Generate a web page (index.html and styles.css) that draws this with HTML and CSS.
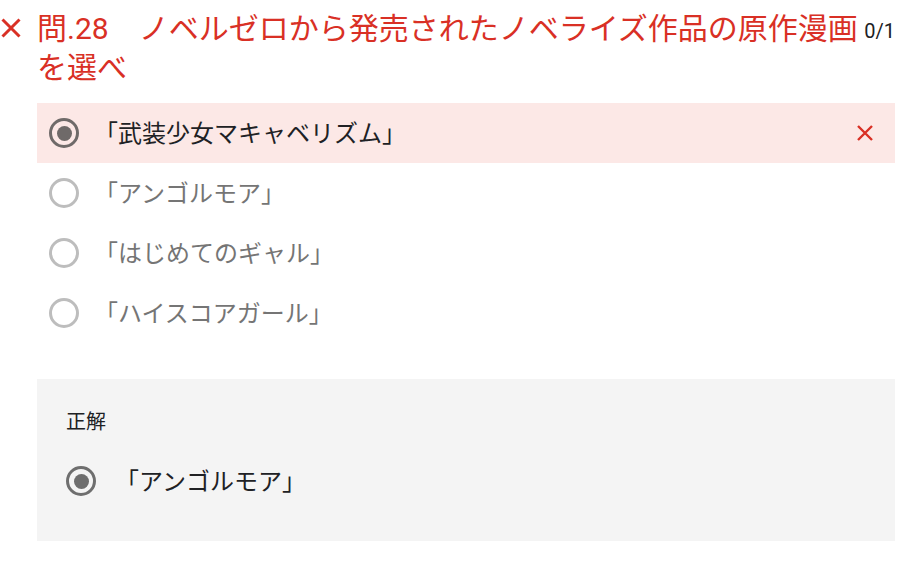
FILE: index.html
```html
<!DOCTYPE html>
<html lang="ja">
  <head>
    <meta charset="UTF-8" />
    <title>問.28</title>
    <link rel="stylesheet" href="styles.css">
  </head>

  <body>
    <div class="question">
      <div class="q-header">
        <div class="q-mark">
          <svg width="20" height="20" viewBox="0 0 20 20">
            <path d="M1.5 1.5 L18.5 18.5 M18.5 1.5 L1.5 18.5" stroke="#d93025" stroke-width="3" fill="none" />
          </svg>
        </div>
        <div class="q-title">問.28　ノベルゼロから発売されたノベライズ作品の原作漫画を選べ</div>
        <div class="q-score">0/1</div>
      </div>

      <div class="options">
        <div class="option wrong">
          <div class="radio checked"></div>
          <div class="option-text">「武装少女マキャベリズム」</div>
          <div class="option-mark">
            <svg width="16" height="16" viewBox="0 0 16 16">
              <path d="M1 1 L15 15 M15 1 L1 15" stroke="#d93025" stroke-width="2.4" fill="none" />
            </svg>
          </div>
        </div>
        <div class="option">
          <div class="radio"></div>
          <div class="option-text">「アンゴルモア」</div>
        </div>
        <div class="option">
          <div class="radio"></div>
          <div class="option-text">「はじめてのギャル」</div>
        </div>
        <div class="option">
          <div class="radio"></div>
          <div class="option-text">「ハイスコアガール」</div>
        </div>
      </div>

      <div class="answer">
        <div class="answer-label">正解</div>
        <div class="option">
          <div class="radio checked"></div>
          <div class="option-text">「アンゴルモア」</div>
        </div>
      </div>
    </div>
  </body>
</html>
```

FILE: styles.css
```css
body {
  margin: 0;
  background: #fff;
  font-family: Roboto, "Noto Sans CJK JP", sans-serif;
  color: #202124;
}

div {
  box-sizing: border-box;
}

.question {
  width: 895px;
  padding-top: 9px;
}

.q-header {
  display: flex;
  align-items: flex-start;
}

.q-mark {
  width: 37px;
  padding-left: 1px;
  padding-top: 9px;
  display: flex;
}

.q-title {
  flex: 1 1 0;
  font-size: 30px;
  line-height: 39px;
  color: #d93025;
}

.q-score {
  font-size: 20px;
  line-height: 26px;
  padding-top: 9px;
  padding-left: 4px;
}

.options {
  margin-top: 16px;
  margin-left: 37px;
}

.option {
  height: 60px;
  display: flex;
  align-items: center;
  padding-left: 12px;
}

.option.wrong {
  background: #fce8e6;
}

.radio {
  width: 30px;
  height: 30px;
  border: 3px solid #bdbdbd;
  border-radius: 50%;
  display: flex;
  align-items: center;
  justify-content: center;
  flex-shrink: 0;
}

.radio.checked {
  border-color: #6f6a69;
}

.radio.checked::after {
  content: "";
  width: 15px;
  height: 15px;
  border-radius: 50%;
  background: #6f6a69;
}

.option-text {
  flex: 1 1 0;
  margin-left: 15px;
  padding-bottom: 4px;
  font-size: 24px;
  color: #757575;
}

.option.wrong .option-text {
  color: #202124;
}

.option-mark {
  display: flex;
  margin-right: 22px;
}

.answer {
  margin: 36px 0 0 37px;
  background: #f4f4f4;
  padding: 29px 0 30px 29px;
}

.answer-label {
  font-size: 20px;
  line-height: 28px;
  margin-bottom: 15px;
}

.answer .option {
  padding-left: 0;
}

.answer .radio.checked {
  border-color: #6e6e6e;
}

.answer .radio.checked::after {
  background: #6e6e6e;
}

.answer .option-text {
  margin-left: 19px;
  color: #202124;
}
```
